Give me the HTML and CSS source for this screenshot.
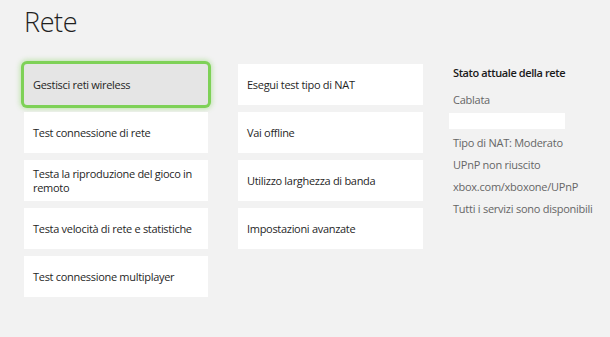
FILE: index.html
```html
<!DOCTYPE html>
<html lang="it">
<head>
    <meta charset="UTF-8">
    <meta name="viewport" content="width=device-width, initial-scale=1.0">
    <title>Rete</title>
    <link rel="stylesheet" href="styles.css">
</head>
<body>

<h1 class="titolo">Rete</h1>

<div class="griglia">
    <div class="colonna">
        <div class="voce attiva">Gestisci reti wireless</div>
        <div class="voce">Test connessione di rete</div>
        <div class="voce">Testa la riproduzione del gioco in remoto</div>
        <div class="voce">Testa velocità di rete e statistiche</div>
        <div class="voce">Test connessione multiplayer</div>
    </div>

    <div class="colonna">
        <div class="voce">Esegui test tipo di NAT</div>
        <div class="voce">Vai offline</div>
        <div class="voce">Utilizzo larghezza di banda</div>
        <div class="voce">Impostazioni avanzate</div>
    </div>

    <div class="stato">
        <h2>Stato attuale della rete</h2>
        <p class="cablata">Cablata</p>
        <div class="nascosto"></div>
        <p class="nat">Tipo di NAT: Moderato</p>
        <p>UPnP non riuscito</p>
        <p>xbox.com/xboxone/UPnP</p>
        <p>Tutti i servizi sono disponibili</p>
    </div>
</div>

</body>
</html>
```

FILE: styles.css
```css
body {
    margin: 0;
    background-color: #f2f2f2;
    font-family: "Open Sans", "Noto Sans", sans-serif;
    color: #1f1f1f;
}

.titolo {
    margin: 0;
    padding: 4px 0 0 24px;
    height: 60px;
    box-sizing: border-box;
    font-size: 27px;
    font-weight: 300;
    letter-spacing: -0.4px;
    line-height: 36px;
}

.griglia {
    display: grid;
    grid-template-columns: 184px 185px 1fr;
    column-gap: 30px;
    padding: 4px 0 0 24px;
}

.colonna {
    display: flex;
    flex-direction: column;
    gap: 7px;
}

.voce {
    display: flex;
    align-items: center;
    height: 41px;
    padding: 0 9px;
    box-sizing: border-box;
    background-color: #ffffff;
    font-size: 11px;
    letter-spacing: -0.3px;
    line-height: 14px;
}

.voce.attiva {
    background-color: #e5e5e5;
    border-radius: 3px;
    box-shadow: 0 0 0 3px #7ed157, 0 0 5px 4px rgba(126, 209, 87, 0.45);
}

.stato {
    font-size: 11px;
    letter-spacing: -0.25px;
    color: #666666;
}

.stato h2 {
    margin: 0;
    font-size: 11px;
    font-weight: 600;
    letter-spacing: -0.4px;
    line-height: 18px;
    color: #1a1a1a;
}

.stato p {
    margin: 0;
    line-height: 22px;
}

.stato .cablata {
    margin-top: 7px;
}

.nascosto {
    width: 116px;
    height: 16px;
    margin: 2px 0 0 -4px;
    background-color: #ffffff;
}

.stato .nat {
    margin-top: 3px;
}
```
